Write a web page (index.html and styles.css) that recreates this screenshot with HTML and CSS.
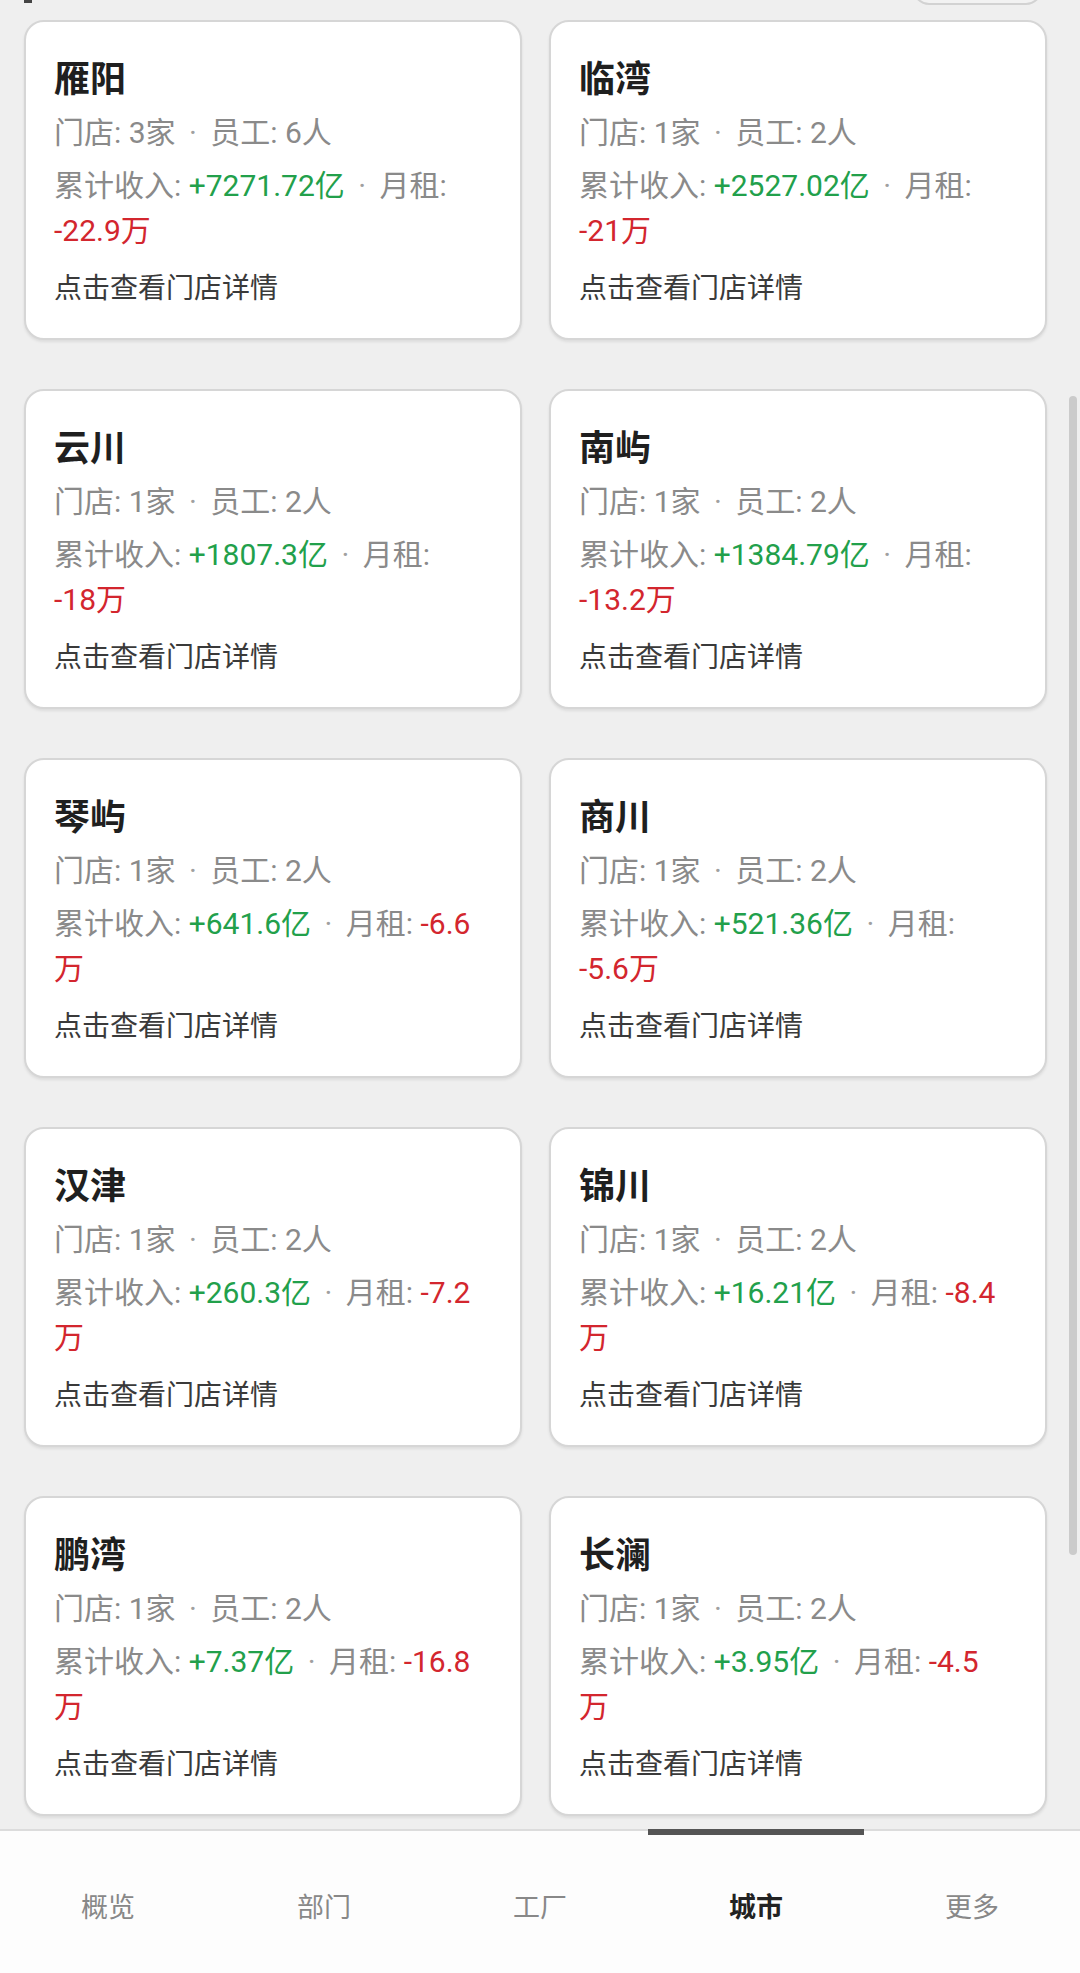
FILE: index.html
```html
<!DOCTYPE html>
<html lang="zh-CN">
<head>
    <meta charset="UTF-8">
    <meta name="viewport" content="width=device-width, initial-scale=1.0">
    <title>城市</title>
    <link rel="stylesheet" href="styles.css">
</head>
<body>
    <div class="page">
        <div class="content">
            <div class="section-head">
                <span class="head-mark"></span>
                <span class="head-button"></span>
            </div>

            <div class="city-grid">
                <div class="city-card">
                    <h3>雁阳</h3>
                    <p class="meta">门店: 3家 <span class="sep">·</span> 员工: 6人</p>
                    <p class="money">累计收入: <span class="up">+7271.72亿</span> <span class="sep">·</span> 月租: <span class="down">-22.9万</span></p>
                    <p class="link">点击查看门店详情</p>
                </div>
                <div class="city-card">
                    <h3>临湾</h3>
                    <p class="meta">门店: 1家 <span class="sep">·</span> 员工: 2人</p>
                    <p class="money">累计收入: <span class="up">+2527.02亿</span> <span class="sep">·</span> 月租: <span class="down">-21万</span></p>
                    <p class="link">点击查看门店详情</p>
                </div>
                <div class="city-card">
                    <h3>云川</h3>
                    <p class="meta">门店: 1家 <span class="sep">·</span> 员工: 2人</p>
                    <p class="money">累计收入: <span class="up">+1807.3亿</span> <span class="sep">·</span> 月租: <span class="down">-18万</span></p>
                    <p class="link">点击查看门店详情</p>
                </div>
                <div class="city-card">
                    <h3>南屿</h3>
                    <p class="meta">门店: 1家 <span class="sep">·</span> 员工: 2人</p>
                    <p class="money">累计收入: <span class="up">+1384.79亿</span> <span class="sep">·</span> 月租: <span class="down">-13.2万</span></p>
                    <p class="link">点击查看门店详情</p>
                </div>
                <div class="city-card">
                    <h3>琴屿</h3>
                    <p class="meta">门店: 1家 <span class="sep">·</span> 员工: 2人</p>
                    <p class="money">累计收入: <span class="up">+641.6亿</span> <span class="sep">·</span> 月租: <span class="down">-6.6万</span></p>
                    <p class="link">点击查看门店详情</p>
                </div>
                <div class="city-card">
                    <h3>商川</h3>
                    <p class="meta">门店: 1家 <span class="sep">·</span> 员工: 2人</p>
                    <p class="money">累计收入: <span class="up">+521.36亿</span> <span class="sep">·</span> 月租: <span class="down">-5.6万</span></p>
                    <p class="link">点击查看门店详情</p>
                </div>
                <div class="city-card">
                    <h3>汉津</h3>
                    <p class="meta">门店: 1家 <span class="sep">·</span> 员工: 2人</p>
                    <p class="money">累计收入: <span class="up">+260.3亿</span> <span class="sep">·</span> 月租: <span class="down">-7.2万</span></p>
                    <p class="link">点击查看门店详情</p>
                </div>
                <div class="city-card">
                    <h3>锦川</h3>
                    <p class="meta">门店: 1家 <span class="sep">·</span> 员工: 2人</p>
                    <p class="money">累计收入: <span class="up">+16.21亿</span> <span class="sep">·</span> 月租: <span class="down">-8.4万</span></p>
                    <p class="link">点击查看门店详情</p>
                </div>
                <div class="city-card">
                    <h3>鹏湾</h3>
                    <p class="meta">门店: 1家 <span class="sep">·</span> 员工: 2人</p>
                    <p class="money">累计收入: <span class="up">+7.37亿</span> <span class="sep">·</span> 月租: <span class="down">-16.8万</span></p>
                    <p class="link">点击查看门店详情</p>
                </div>
                <div class="city-card">
                    <h3>长澜</h3>
                    <p class="meta">门店: 1家 <span class="sep">·</span> 员工: 2人</p>
                    <p class="money">累计收入: <span class="up">+3.95亿</span> <span class="sep">·</span> 月租: <span class="down">-4.5万</span></p>
                    <p class="link">点击查看门店详情</p>
                </div>
            </div>

            <div class="scroll-thumb"></div>
        </div>

        <nav class="tab-bar">
            <a class="tab">概览</a>
            <a class="tab">部门</a>
            <a class="tab">工厂</a>
            <a class="tab active">城市</a>
            <a class="tab">更多</a>
        </nav>
    </div>
</body>
</html>
```

FILE: styles.css
```css
body {
    margin: 0;
    font-family: Roboto, "Noto Sans CJK SC", sans-serif;
    background-color: #efefef;
}

.page {
    display: flex;
    flex-direction: column;
    height: 100vh;
}

.content {
    position: relative;
    flex: 1;
    overflow: hidden;
    padding: 0 33px 0 24px;
}

/* header row, mostly scrolled out of view */
.section-head {
    display: flex;
    justify-content: space-between;
    align-items: flex-end;
    height: 60px;
    margin-top: -55px;
}

.head-mark {
    width: 8px;
    height: 40px;
    margin-bottom: 2px;
    background-color: #444;
}

.head-button {
    box-sizing: border-box;
    width: 129px;
    height: 50px;
    margin-right: 5px;
    border: 2px solid #d2d2d2;
    border-radius: 16px;
    background-color: #f2f2f2;
}

.city-grid {
    display: grid;
    grid-template-columns: 1fr 1fr;
    column-gap: 27px;
    row-gap: 49px;
    margin-top: 15px;
}

.city-card {
    background-color: #ffffff;
    border: 2px solid #d6d6d6;
    border-radius: 20px;
    padding: 32px 47px 28px 28px;
    box-shadow: 0 2px 3px rgba(0, 0, 0, 0.08);
}

.city-card h3 {
    margin: 0;
    font-size: 36px;
    line-height: 52px;
    font-weight: 700;
    color: #1f1f1f;
}

.city-card p {
    margin: 0;
}

.meta {
    margin-top: 4px !important;
    font-size: 30px;
    line-height: 45px;
    color: #8a8a8a;
}

.money {
    margin-top: 8px !important;
    font-size: 30px;
    line-height: 45px;
    color: #8a8a8a;
}

.sep {
    margin: 0 6px;
    color: #a0a0a0;
}

.up {
    color: #22a04b;
}

.down {
    color: #d3262e;
}

.link {
    margin-top: 15px !important;
    font-size: 28px;
    line-height: 42px;
    color: #3a3a3a;
}

.scroll-thumb {
    position: absolute;
    top: 396px;
    right: 3px;
    width: 8px;
    height: 1159px;
    border-radius: 4px;
    background-color: #cbcbcb;
}

.tab-bar {
    display: flex;
    height: 142px;
    border-top: 2px solid #dcdcdc;
    background-color: #fdfdfd;
}

.tab {
    flex: 1;
    display: flex;
    justify-content: center;
    align-items: center;
    margin-top: -2px;
    padding-top: 2px;
    border-top: 6px solid transparent;
    font-size: 27px;
    color: #888;
}

.tab.active {
    border-top-color: #555;
    color: #222;
    font-weight: 700;
}
```
